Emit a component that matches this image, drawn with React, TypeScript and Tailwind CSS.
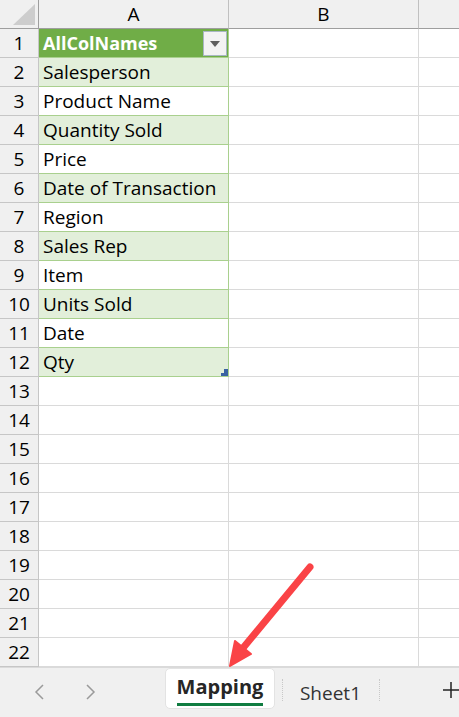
import React from "react";

const names = [
  "Salesperson",
  "Product Name",
  "Quantity Sold",
  "Price",
  "Date of Transaction",
  "Region",
  "Sales Rep",
  "Item",
  "Units Sold",
  "Date",
  "Qty",
];

const font = { fontFamily: '"Open Sans", "Noto Sans", sans-serif' };

function RowHead({ n }: { n: number }) {
  return (
    <div className="w-[39px] shrink-0 h-full flex items-center justify-center bg-[#f0f0f0] border-r border-b border-[#c6c6c6] text-[19px] text-black">
      {n}
    </div>
  );
}

export default function App() {
  const rows = Array.from({ length: 22 }, (_, i) => i + 1);

  return (
    <div className="relative w-[459px] h-[717px] overflow-hidden bg-white" style={font}>
      {/* column headers */}
      <div className="flex h-[29px]">
        <div className="w-[39px] shrink-0 bg-[#f0f0f0] border-r border-b border-[#9e9e9e] flex items-end justify-end pr-[3px] pb-[3px]">
          <svg width="22" height="21" viewBox="0 0 22 21">
            <polygon points="22,0 22,21 0,21" fill="#cdcdcd" />
          </svg>
        </div>
        <div className="w-[190px] shrink-0 bg-[#f0f0f0] border-r border-b border-[#9e9e9e] border-r-[#c0c0c0] flex items-center justify-center text-[19px] text-black">
          A
        </div>
        <div className="w-[190px] shrink-0 bg-[#f0f0f0] border-r border-b border-[#9e9e9e] border-r-[#c0c0c0] flex items-center justify-center text-[19px] text-black">
          B
        </div>
        <div className="flex-1 bg-[#f0f0f0] border-b border-[#9e9e9e]" />
      </div>

      {rows.map((n) => {
        const isHead = n === 1;
        const inTable = n <= 12;
        const banded = inTable && !isHead && n % 2 === 0;
        return (
          <div key={n} className="flex h-[29px]">
            <RowHead n={n} />
            {isHead ? (
              <div className="relative w-[190px] shrink-0 h-full bg-[#70ad47] border-r border-b border-[#a9d08e] flex items-center pl-[4px] text-[18px] font-bold text-white">
                AllColNames
                <div className="absolute right-[1px] top-[2px] w-[24px] h-[25px] bg-[#f3f3f3] border border-[#a9b7c4] flex items-center justify-center">
                  <svg width="10" height="6" viewBox="0 0 10 6">
                    <polygon points="0,0 10,0 5,6" fill="#5f5f5f" />
                  </svg>
                </div>
              </div>
            ) : inTable ? (
              <div
                className={`relative w-[190px] shrink-0 h-full border-r border-b border-[#a9d08e] flex items-center pl-[4px] text-[19px] text-black ${
                  banded ? "bg-[#e2efda]" : "bg-white"
                }`}
              >
                {names[n - 2]}
                {n === 12 && (
                  <svg className="absolute right-0 bottom-0" width="7" height="7" viewBox="0 0 7 7">
                    <polygon points="3,0 7,0 7,7 0,7 0,4 3,4" fill="#3a63a3" />
                  </svg>
                )}
              </div>
            ) : (
              <div className="w-[190px] shrink-0 h-full border-r border-b border-[#dadada]" />
            )}
            <div className="w-[190px] shrink-0 h-full border-r border-b border-[#dadada]" />
            <div className="flex-1 h-full border-b border-[#dadada]" />
          </div>
        );
      })}

      {/* sheet tabs */}
      <div className="flex items-start h-[50px] bg-[#f0f0f0] border-t border-[#dadada]">
        <div className="flex items-center gap-[38px] pl-[34px] pt-[16px]">
          <svg width="12" height="16" viewBox="0 0 12 16">
            <polyline points="9,1 2,8 9,15" fill="none" stroke="#9a9a9a" strokeWidth="1.5" />
          </svg>
          <svg width="12" height="16" viewBox="0 0 12 16">
            <polyline points="3,1 10,8 3,15" fill="none" stroke="#9a9a9a" strokeWidth="1.5" />
          </svg>
        </div>
        <div className="ml-[69px] w-[110px] h-[41px] bg-white rounded-[5px] border border-[#e3e3e3] flex flex-col items-center">
          <span className="mt-[4px] text-[20px] font-bold text-[#262626] leading-[27px]">Mapping</span>
          <span className="mt-[3px] w-[86px] h-[3px] bg-[#107c41]" />
        </div>
        <div className="ml-[7px] mt-[11px] h-[22px] border-l border-dotted border-[#c8c8c8]" />
        <span className="ml-[17px] mt-[11px] text-[19px] text-[#333333]">Sheet1</span>
        <div className="ml-[18px] mt-[11px] h-[22px] border-l border-dotted border-[#c8c8c8]" />
        <svg className="ml-[63px] mt-[14px]" width="16" height="16" viewBox="0 0 16 16">
          <line x1="8" y1="0" x2="8" y2="16" stroke="#222" strokeWidth="1.5" />
          <line x1="0" y1="8" x2="16" y2="8" stroke="#222" strokeWidth="1.5" />
        </svg>
      </div>

      {/* red arrow annotation */}
      <svg className="absolute left-0 top-0 pointer-events-none" width="459" height="717" viewBox="0 0 459 717">
        <line x1="310" y1="567" x2="243" y2="648" stroke="#fa4346" strokeWidth="7" strokeLinecap="round" />
        <polygon points="230,666 235,641 251,654" fill="#fa4346" stroke="#fa4346" strokeWidth="2" strokeLinejoin="round" />
      </svg>
    </div>
  );
}
